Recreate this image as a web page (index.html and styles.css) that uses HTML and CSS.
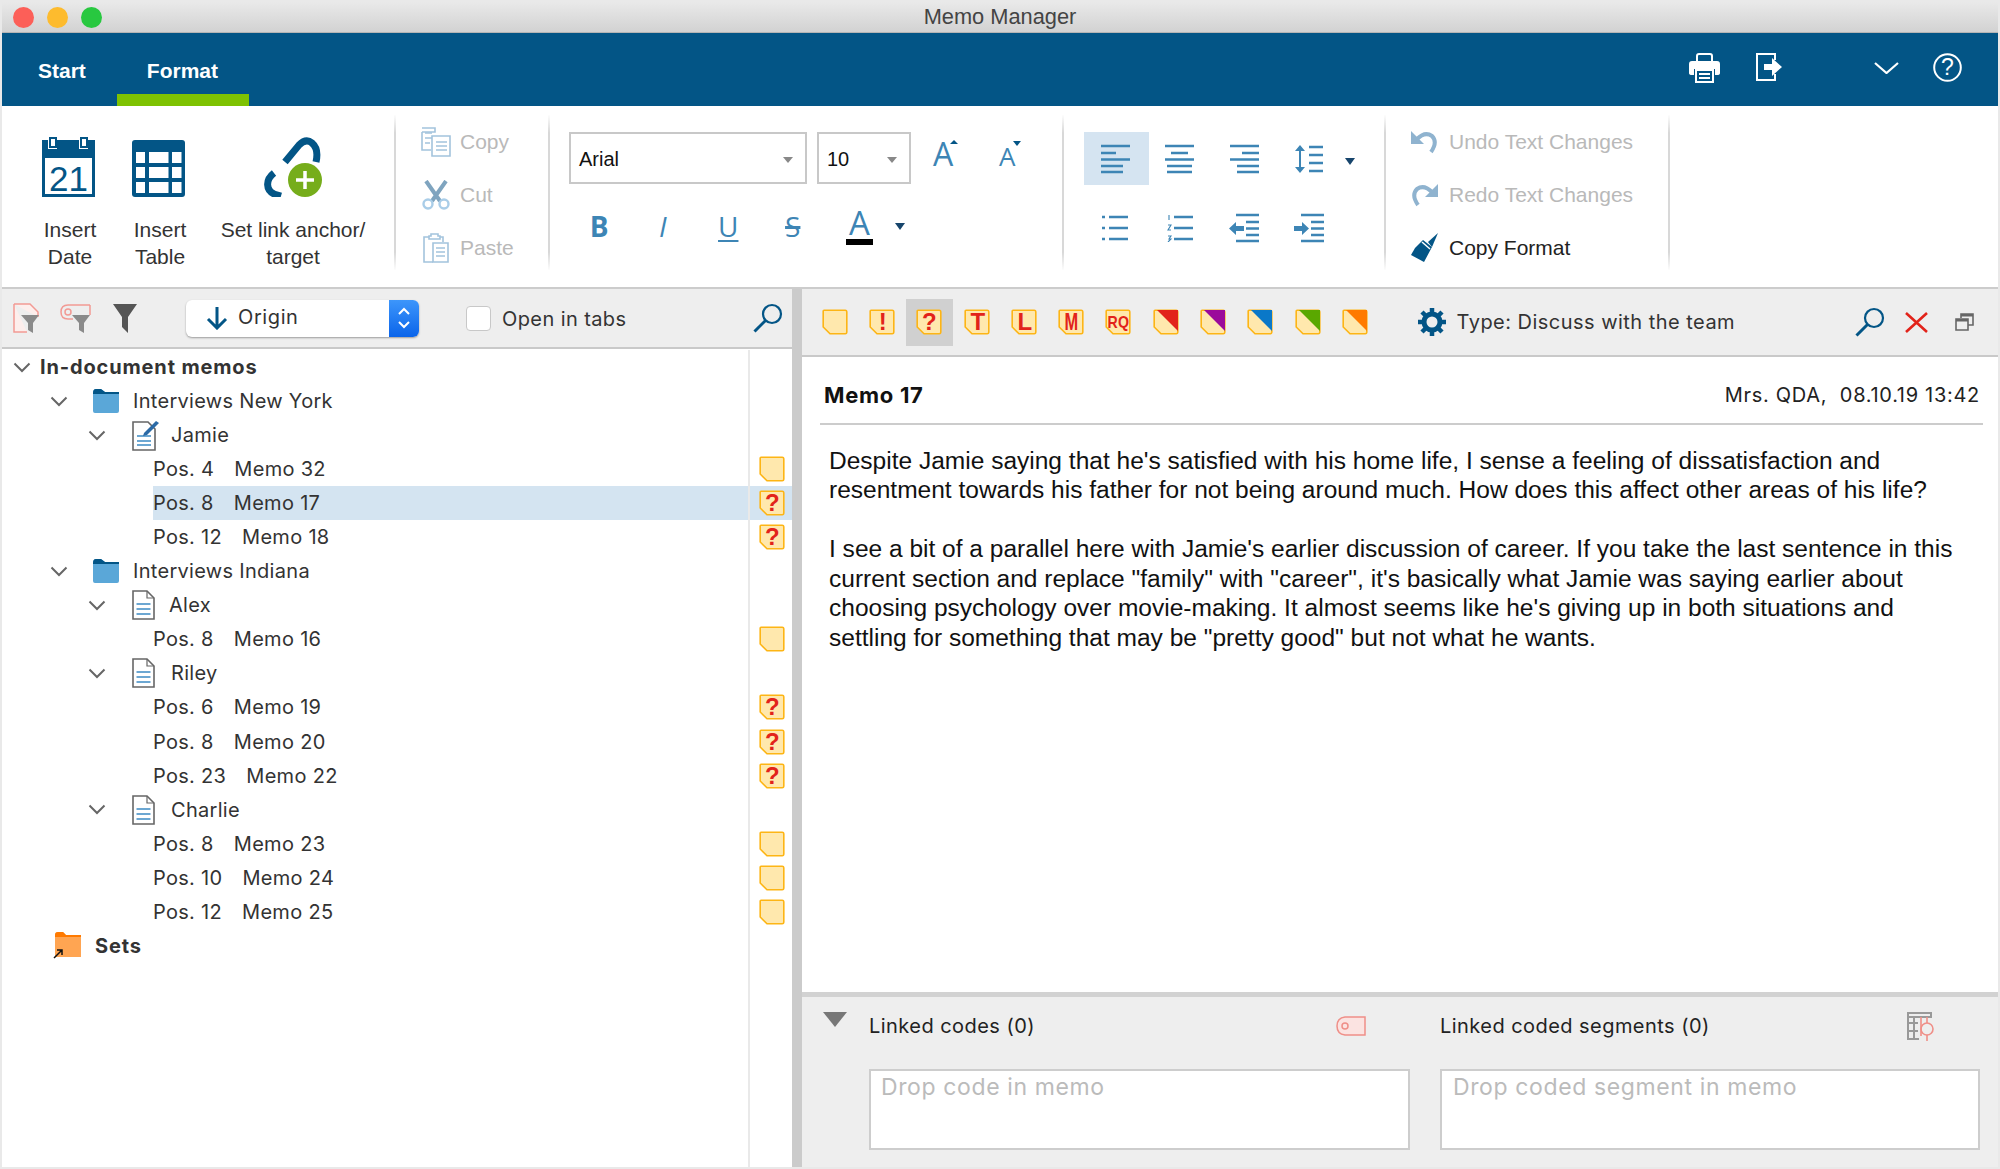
FILE: index.html
```html
<!DOCTYPE html>
<html lang="en">
<head>
  <meta charset="UTF-8" />
  <title>Memo Manager</title>
  <link rel="stylesheet" href="styles.css">
</head>
<body>

  <!-- shared icons -->
  <svg class="defs" width="0" height="0">
    <symbol id="note" viewBox="0 0 26 26">
      <path d="M2 1.2H23.2Q24.8 1.2 24.8 2.8V23.2Q24.8 24.8 23.2 24.8H8L1.2 18V2Q1.2 1.2 2 1.2Z" fill="#ffe8ad" stroke="#fdb515" stroke-width="1.6"/>
    </symbol>
    <symbol id="chevron" viewBox="0 0 18 11">
      <path d="M1.5 1.5L9 9L16.5 1.5" fill="none" stroke="#666" stroke-width="2"/>
    </symbol>
    <symbol id="folder" viewBox="0 0 26 24">
      <path d="M0 4Q0 0 3 0H8L12 3H26V22Q26 24 24 24H2Q0 24 0 22Z" fill="#5aa7d8"/>
      <path d="M0 4Q0 0 3 0H8L12 3H26V5H0Z" fill="#035586"/>
    </symbol>
    <symbol id="doc" viewBox="0 0 23 30">
      <path d="M1 1H15L22 8V29H1Z" fill="#fff" stroke="#666" stroke-width="1.6"/>
      <path d="M15 1V8H22" fill="none" stroke="#666" stroke-width="1.2"/>
      <path d="M4.5 14H18.500M4.500 19H18.500M4.500 24H18.500" stroke="#3d8ac4" stroke-width="1.6"/>
    </symbol>
    <symbol id="magnifier" viewBox="0 0 30 30">
      <circle cx="19" cy="11" r="9" fill="none" stroke="#035586" stroke-width="2.2"/>
      <path d="M12.500 17.500L1.500 28.500" stroke="#035586" stroke-width="3"/>
    </symbol>
    <symbol id="lines-left" viewBox="0 0 29 30">
      <path d="M0 2H29M0 9H15M0 15.500H29M0 22H22M0 28H22" stroke="#3d85b5" stroke-width="2.600"/>
    </symbol>
    <symbol id="lines-center" viewBox="0 0 29 30">
      <path d="M0 2H29M6 9H23M0 15.500H29M2 22H27M2 28H27" stroke="#3d85b5" stroke-width="2.600"/>
    </symbol>
    <symbol id="lines-right" viewBox="0 0 29 30">
      <path d="M0 2H29M12 9H29M0 15.500H29M7 22H29M7 28H29" stroke="#3d85b5" stroke-width="2.600"/>
    </symbol>
  </svg>

  <div class="window">

    <div class="title-bar">
      <div class="lights">
        <span class="light red"></span>
        <span class="light yellow"></span>
        <span class="light green"></span>
      </div>
      <span class="title">Memo Manager</span>
    </div>

    <div class="tab-bar">
      <span class="tab">Start</span>
      <span class="tab active">Format</span>
      <div class="tab-actions">
        <svg class="printer" width="31" height="30" viewBox="0 0 31 30">
          <path d="M8 8V3Q8 1 10 1H21Q23 1 23 3V8" fill="none" stroke="#fff" stroke-width="2"/>
          <path d="M3 8H28Q31 8 31 11V20Q31 22 28 22H26V16H5V22H3Q0 22 0 20V11Q0 8 3 8Z" fill="#fff"/>
          <path d="M7 17H24V29H7Z" fill="#035586" stroke="#fff" stroke-width="2"/>
          <path d="M10 21H21M10 25H21" stroke="#fff" stroke-width="2"/>
        </svg>
        <svg class="exit" width="26" height="28" viewBox="0 0 26 28">
          <path d="M19 7V1H1V27H19V21" fill="none" stroke="#fff" stroke-width="2"/>
          <path d="M8 11H16V5L26 14L16 23V17H8Z" fill="#fff"/>
        </svg>
        <svg class="caret" width="25" height="12" viewBox="0 0 25 12">
          <path d="M1 1L12.500 11L24 1" fill="none" stroke="#fff" stroke-width="2.200"/>
        </svg>
        <svg width="29" height="29" viewBox="0 0 29 29">
          <circle cx="14.500" cy="14.500" r="13.300" fill="none" stroke="#fff" stroke-width="2"/>
          <text class="help-mark" x="14.500" y="22" text-anchor="middle">?</text>
        </svg>
      </div>
    </div>

    <div class="ribbon">
      <div class="group group-insert">
        <div class="tool tool-date">
          <svg width="53" height="60" viewBox="0 0 53 60">
            <path d="M0 3H6V12H15V3H37V12H46V3H53V60H0Z" fill="#035586"/>
            <path d="M8 1H14V10H8ZM39 1H45V10H39Z" fill="#fff" stroke="#035586" stroke-width="2"/>
            <rect x="3" y="21" width="47" height="36" fill="#fff"/>
            <text class="cal-day" x="26.500" y="54" text-anchor="middle">21</text>
          </svg>
          <span>Insert<br>Date</span>
        </div>
        <div class="tool tool-table">
          <svg width="53" height="60" viewBox="0 0 53 60">
            <rect x="0" y="3" width="53" height="57" rx="3" fill="#035586"/>
            <path d="M4 15H13V26H4ZM17 15H36.500V26H17ZM40 15H49.500V26H40ZM4 30H13V41H4ZM17 30H36.500V41H17ZM40 30H49.500V41H40ZM4 45H13V56H4ZM17 45H36.500V56H17ZM40 45H49.500V56H40Z" fill="#fff"/>
          </svg>
          <span>Insert<br>Table</span>
        </div>
        <div class="tool tool-link">
          <svg width="58" height="60" viewBox="0 0 58 60">
            <path d="M21 25L35 8Q42 1 48 6Q55 12 52 25" fill="none" stroke="#035586" stroke-width="7"/>
            <path d="M10 36C1 43 2 53 10 57L17 59" fill="none" stroke="#035586" stroke-width="7"/>
            <circle cx="41" cy="43" r="17" fill="#76ad1b"/>
            <path d="M41 34V52M32 43H50" stroke="#fff" stroke-width="3.500"/>
          </svg>
          <span>Set link anchor/<br>target</span>
        </div>
      </div>

      <div class="group group-clipboard">
        <div class="action off">
          <svg width="30" height="30" viewBox="0 0 30 30">
            <path d="M1 1H14V5H1M1 5V23H10M14 5" fill="#fff" stroke="#a3c4dd" stroke-width="1.600"/>
            <path d="M4 6H11M4 11H11M4 16H9" stroke="#a3c4dd" stroke-width="1.500"/>
            <path d="M11 9H29V29H11Z" fill="#fff" stroke="#a3c4dd" stroke-width="1.600"/>
            <path d="M15 15H26M15 19H26M15 23H26" stroke="#a3c4dd" stroke-width="1.500"/>
          </svg>
          <span>Copy</span>
        </div>
        <div class="action off">
          <svg width="30" height="30" viewBox="0 0 30 30">
            <path d="M5 1L19 21M25 1L11 21" stroke="#7fa4bf" stroke-width="4"/>
            <circle cx="7" cy="24" r="4.500" fill="none" stroke="#a9cde8" stroke-width="2.400"/>
            <circle cx="23" cy="24" r="4.500" fill="none" stroke="#a9cde8" stroke-width="2.400"/>
          </svg>
          <span>Cut</span>
        </div>
        <div class="action off">
          <svg width="30" height="30" viewBox="0 0 30 30">
            <path d="M8 4H3V29H12M19 4H22V9" fill="none" stroke="#a3c4dd" stroke-width="1.600"/>
            <path d="M8 6V3H10V1H17V3H19V6Z" fill="#fff" stroke="#a3c4dd" stroke-width="1.600"/>
            <path d="M12 10H27V29H12Z" fill="#fff" stroke="#a3c4dd" stroke-width="1.600"/>
            <path d="M15 15H24M15 19H24M15 23H24" stroke="#a3c4dd" stroke-width="1.500"/>
          </svg>
          <span>Paste</span>
        </div>
      </div>

      <div class="group group-font">
        <div class="font-row">
          <div class="combo combo-font"><span>Arial</span><span class="combo-arrow"></span></div>
          <div class="combo combo-size"><span>10</span><span class="combo-arrow"></span></div>
          <span class="grow">A<i class="tip-up"></i></span>
          <span class="shrink">A<i class="tip-down"></i></span>
        </div>
        <div class="style-row">
          <span class="style bold">B</span>
          <span class="style italic">I</span>
          <span class="style under">U</span>
          <span class="style strike">S</span>
          <span class="style colour">A</span>
          <span class="drop-arrow"></span>
        </div>
      </div>

      <div class="group group-para">
        <div class="para-cell on"><svg width="29" height="30"><use href="#lines-left"/></svg></div>
        <div class="para-cell"><svg width="29" height="30"><use href="#lines-center"/></svg></div>
        <div class="para-cell"><svg width="29" height="30"><use href="#lines-right"/></svg></div>
        <div class="para-cell spacing">
          <svg width="28" height="30" viewBox="0 0 28 30">
            <path d="M5 4V26" stroke="#3d85b5" stroke-width="2"/>
            <path d="M0 7L5 1L10 7ZM0 23L5 29L10 23Z" fill="#3d85b5"/>
            <path d="M14 3H28M14 11H28M14 19H28M14 27H28" stroke="#3d85b5" stroke-width="2.600"/>
          </svg>
          <span class="drop-arrow"></span>
        </div>
        <div class="para-cell">
          <svg width="26" height="28" viewBox="0 0 26 28">
            <path d="M0 3H3M7 3H26M0 14H3M7 14H26M0 25H3M7 25H26" stroke="#3d85b5" stroke-width="2.400"/>
          </svg>
        </div>
        <div class="para-cell">
          <svg width="26" height="28" viewBox="0 0 26 28">
            <path d="M7 3H26M7 14H26M7 25H26" stroke="#3d85b5" stroke-width="2.400"/>
            <path d="M2 1V6M1 11H4L1 16H4M1 22H4L2 25H4L1 28" fill="none" stroke="#3d85b5" stroke-width="1.100"/>
          </svg>
        </div>
        <div class="para-cell">
          <svg width="30" height="30" viewBox="0 0 30 30">
            <path d="M7 2H30M17 9H30M17 15.500H30M17 22H30M7 28H30" stroke="#3d85b5" stroke-width="2.600"/>
            <path d="M0 15.500L7 9V13H15V18H7V22Z" fill="#3d85b5"/>
          </svg>
        </div>
        <div class="para-cell">
          <svg width="30" height="30" viewBox="0 0 30 30">
            <path d="M7 2H30M17 9H30M17 15.500H30M17 22H30M7 28H30" stroke="#3d85b5" stroke-width="2.600"/>
            <path d="M15 15.500L8 9V13H0V18H8V22Z" fill="#3d85b5"/>
          </svg>
        </div>
      </div>

      <div class="group group-undo">
        <div class="action off">
          <svg width="28" height="24" viewBox="0 0 28 24">
            <path d="M6 9Q14 1 21 6Q27 12 20 22" fill="none" stroke="#8fb3cf" stroke-width="4"/>
            <path d="M0 1V14H13Z" fill="#8fb3cf"/>
          </svg>
          <span>Undo Text Changes</span>
        </div>
        <div class="action off">
          <svg width="28" height="24" viewBox="0 0 28 24">
            <path d="M21 9Q13 1 6 6Q0 12 7 22" fill="none" stroke="#8fb3cf" stroke-width="4"/>
            <path d="M27 1V14H14Z" fill="#8fb3cf"/>
          </svg>
          <span>Redo Text Changes</span>
        </div>
        <div class="action">
          <svg width="28" height="30" viewBox="0 0 28 30">
            <path d="M17 9L27 0L21 14Z" fill="#035586"/>
            <path d="M12 7L21 14L13 29L0 22L4 15Z" fill="#035586"/>
            <path d="M11 9L19 16" stroke="#fff" stroke-width="1.500"/>
          </svg>
          <span>Copy Format</span>
        </div>
      </div>
    </div>

    <div class="panes">

      <div class="left-pane">
        <div class="tree-toolbar">
          <svg class="filter" width="26" height="30" viewBox="0 0 26 30">
            <path d="M1 1H17L25 9V14M1 1V29H14" fill="#fdeeec" stroke="#f29a94" stroke-width="1.500"/>
            <path d="M8 12H26L20 20V30L15 27V20Z" fill="#8a8a8a"/>
          </svg>
          <svg class="filter" width="31" height="30" viewBox="0 0 31 30">
            <path d="M30 2H8Q1 2 1 9Q1 16 8 16H13M30 2V12" fill="none" stroke="#f29a94" stroke-width="1.500"/>
            <circle cx="8" cy="9" r="3" fill="none" stroke="#f29a94" stroke-width="1.500"/>
            <path d="M12 12H30L24 20V30L19 27V20Z" fill="#8a8a8a"/>
          </svg>
          <svg class="filter" width="24" height="29" viewBox="0 0 24 29">
            <path d="M0 0H24L15 13V29L9 23V13Z" fill="#555"/>
          </svg>
          <div class="select">
            <svg width="22" height="24" viewBox="0 0 22 24">
              <path d="M11 1V22M2 13L11 22L20 13" fill="none" stroke="#035586" stroke-width="3"/>
            </svg>
            <span>Origin</span>
            <span class="select-stepper">
              <svg width="14" height="24" viewBox="0 0 14 24">
                <path d="M2 8L7 3L12 8M2 16L7 21L12 16" fill="none" stroke="#fff" stroke-width="2"/>
              </svg>
            </span>
          </div>
          <label class="tabs-check"><span class="box"></span>Open in tabs</label>
          <svg class="tree-search" width="30" height="30"><use href="#magnifier"/></svg>
        </div>

        <div class="tree">
          <div class="row"><div class="name root"><svg class="chev" width="18" height="11"><use href="#chevron"/></svg><b>In-document memos</b></div><div class="mark"></div></div>
          <div class="row"><div class="name l1"><svg class="chev" width="18" height="11"><use href="#chevron"/></svg><svg class="ico" width="26" height="24"><use href="#folder"/></svg>Interviews New York</div><div class="mark"></div></div>
          <div class="row"><div class="name l2"><svg class="chev" width="18" height="11"><use href="#chevron"/></svg>
            <svg class="ico pen" width="27" height="31" viewBox="0 0 27 31">
              <path d="M1 2H16L23 9V30H1Z" fill="#fff" stroke="#666" stroke-width="1.600"/>
              <path d="M5 16H19M5 21H19M5 25H19" stroke="#3d8ac4" stroke-width="1.500"/>
              <path d="M12 13L24 1L27 3L15 15L11 16Z" fill="#2b6aa6"/>
            </svg>Jamie</div><div class="mark"></div></div>
          <div class="row"><div class="name l3">Pos. 4<em>Memo 32</em></div><div class="mark"><svg width="26" height="26"><use href="#note"/></svg></div></div>
          <div class="row selected"><div class="name l3">Pos. 8<em>Memo 17</em></div><div class="mark"><svg width="26" height="26"><use href="#note"/><text class="q" x="13.500" y="21" text-anchor="middle">?</text></svg></div></div>
          <div class="row"><div class="name l3">Pos. 12<em>Memo 18</em></div><div class="mark"><svg width="26" height="26"><use href="#note"/><text class="q" x="13.500" y="21" text-anchor="middle">?</text></svg></div></div>
          <div class="row"><div class="name l1"><svg class="chev" width="18" height="11"><use href="#chevron"/></svg><svg class="ico" width="26" height="24"><use href="#folder"/></svg>Interviews Indiana</div><div class="mark"></div></div>
          <div class="row"><div class="name l2"><svg class="chev" width="18" height="11"><use href="#chevron"/></svg><svg class="ico" width="23" height="30"><use href="#doc"/></svg><span class="alex">Alex</span></div><div class="mark"></div></div>
          <div class="row"><div class="name l3">Pos. 8<em>Memo 16</em></div><div class="mark"><svg width="26" height="26"><use href="#note"/></svg></div></div>
          <div class="row"><div class="name l2"><svg class="chev" width="18" height="11"><use href="#chevron"/></svg><svg class="ico" width="23" height="30"><use href="#doc"/></svg>Riley</div><div class="mark"></div></div>
          <div class="row"><div class="name l3">Pos. 6<em>Memo 19</em></div><div class="mark"><svg width="26" height="26"><use href="#note"/><text class="q" x="13.500" y="21" text-anchor="middle">?</text></svg></div></div>
          <div class="row"><div class="name l3">Pos. 8<em>Memo 20</em></div><div class="mark"><svg width="26" height="26"><use href="#note"/><text class="q" x="13.500" y="21" text-anchor="middle">?</text></svg></div></div>
          <div class="row"><div class="name l3">Pos. 23<em>Memo 22</em></div><div class="mark"><svg width="26" height="26"><use href="#note"/><text class="q" x="13.500" y="21" text-anchor="middle">?</text></svg></div></div>
          <div class="row"><div class="name l2"><svg class="chev" width="18" height="11"><use href="#chevron"/></svg><svg class="ico" width="23" height="30"><use href="#doc"/></svg>Charlie</div><div class="mark"></div></div>
          <div class="row"><div class="name l3">Pos. 8<em>Memo 23</em></div><div class="mark"><svg width="26" height="26"><use href="#note"/></svg></div></div>
          <div class="row"><div class="name l3">Pos. 10<em>Memo 24</em></div><div class="mark"><svg width="26" height="26"><use href="#note"/></svg></div></div>
          <div class="row"><div class="name l3">Pos. 12<em>Memo 25</em></div><div class="mark"><svg width="26" height="26"><use href="#note"/></svg></div></div>
          <div class="row"><div class="name sets">
            <svg class="ico" width="28" height="27" viewBox="0 0 28 27">
              <path d="M2 3Q2 0 5 0H10L13 3H28V25H2Z" fill="#ffa552"/>
              <path d="M2 3Q2 0 5 0H10L13 3H28V5H2Z" fill="#ff7a00"/>
              <path d="M1 26L9 18M4 18H9V23" fill="none" stroke="#111" stroke-width="1.500"/>
            </svg><b>Sets</b></div><div class="mark"></div></div>
          <div class="row rest"><div class="name"></div><div class="mark"></div></div>
        </div>
      </div>

      <div class="splitter"></div>

      <div class="right-pane">
        <div class="memo-toolbar">
          <div class="note-types">
            <span class="note-type"><svg width="26" height="26"><use href="#note"/></svg></span>
            <span class="note-type"><svg width="26" height="26"><use href="#note"/><text class="q" x="14" y="21" text-anchor="middle">!</text></svg></span>
            <span class="note-type on"><svg width="26" height="26"><use href="#note"/><text class="q" x="13.500" y="21" text-anchor="middle">?</text></svg></span>
            <span class="note-type"><svg width="26" height="26"><use href="#note"/><text class="q" x="14" y="21" text-anchor="middle">T</text></svg></span>
            <span class="note-type"><svg width="26" height="26"><use href="#note"/><text class="q" x="14" y="21" text-anchor="middle">L</text></svg></span>
            <span class="note-type"><svg width="26" height="26"><use href="#note"/><text class="q" x="6.500" y="21" textLength="14" lengthAdjust="spacingAndGlyphs">M</text></svg></span>
            <span class="note-type"><svg width="26" height="26"><use href="#note"/><text class="q tiny" x="2.500" y="18.500" textLength="22" lengthAdjust="spacingAndGlyphs">RQ</text></svg></span>
            <span class="note-type"><svg width="26" height="26"><use href="#note"/><path d="M4 1H25V22Z" fill="#e2231a"/></svg></span>
            <span class="note-type"><svg width="26" height="26"><use href="#note"/><path d="M4 1H25V22Z" fill="#9b0a9b"/></svg></span>
            <span class="note-type"><svg width="26" height="26"><use href="#note"/><path d="M4 1H25V22Z" fill="#0a78c8"/></svg></span>
            <span class="note-type"><svg width="26" height="26"><use href="#note"/><path d="M4 1H25V22Z" fill="#5aa800"/></svg></span>
            <span class="note-type"><svg width="26" height="26"><use href="#note"/><path d="M4 1H25V22Z" fill="#ff7a00"/></svg></span>
          </div>
          <div class="memo-type">
            <svg width="28" height="28" viewBox="0 0 28 28">
              <circle cx="14" cy="14" r="8" fill="none" stroke="#035586" stroke-width="5"/>
              <path d="M14 0V6M14 22V28M0 14H6M22 14H28M4 4L8 8M20 20L24 24M24 4L20 8M8 20L4 24" stroke="#035586" stroke-width="4.500"/>
            </svg>
            <span>Type: Discuss with the team</span>
          </div>
          <div class="memo-actions">
            <svg width="30" height="30"><use href="#magnifier"/></svg>
            <svg width="23" height="21" viewBox="0 0 23 21">
              <path d="M1 1L22 20M22 1L1 20" stroke="#e2231a" stroke-width="2.600"/>
            </svg>
            <svg width="19" height="18" viewBox="0 0 19 18">
              <path d="M6 5V1H18V12H13" fill="none" stroke="#666" stroke-width="1.600"/>
              <path d="M6 1H18V3.500H6Z" fill="#666"/>
              <path d="M1 6H13V17H1Z" fill="none" stroke="#666" stroke-width="1.600"/>
              <path d="M1 6H13V8.500H1Z" fill="#666"/>
            </svg>
          </div>
        </div>

        <div class="memo-head">
          <b>Memo 17</b>
          <span>Mrs. QDA,&nbsp; 08.10.19 13:42</span>
        </div>

        <div class="memo-body">
          <p>Despite Jamie saying that he's satisfied with his home life, I sense a feeling of dissatisfaction and<br>resentment towards his father for not being around much. How does this affect other areas of his life?</p>
          <p>I see a bit of a parallel here with Jamie's earlier discussion of career. If you take the last sentence in this<br>current section and replace "family" with "career", it's basically what Jamie was saying earlier about<br>choosing psychology over movie-making. It almost seems like he's giving up in both situations and<br>settling for something that may be "pretty good" but not what he wants.</p>
        </div>

        <div class="links">
          <div class="link-col link-codes">
            <div class="link-head">
              <span class="fold"></span>
              <span class="link-title">Linked codes (0)</span>
              <svg class="link-icon" width="30" height="20" viewBox="0 0 30 20">
                <path d="M29 1H9Q1 2 1 10Q1 18 9 19H29Z" fill="#fbe3e1" stroke="#ef8f88" stroke-width="1.500"/>
                <circle cx="9" cy="10" r="3" fill="none" stroke="#ef8f88" stroke-width="1.500"/>
              </svg>
            </div>
            <div class="drop">Drop code in memo</div>
          </div>
          <div class="link-col link-segments">
            <div class="link-head">
              <span class="link-title">Linked coded segments (0)</span>
              <svg class="link-icon" width="28" height="29" viewBox="0 0 28 29">
                <path d="M1 1H24V5H1ZM1 1V27H12M1 11H11M1 19H11M7 5V27" fill="none" stroke="#999" stroke-width="2"/>
                <circle cx="20" cy="17" r="6" fill="none" stroke="#ef8f88" stroke-width="1.600"/>
                <path d="M20 5V11M20 23V29M14 5V24" stroke="#ef8f88" stroke-width="1.600"/>
              </svg>
            </div>
            <div class="drop">Drop coded segment in memo</div>
          </div>
        </div>
      </div>

    </div>
  </div>

</body>
</html>
```

FILE: styles.css
```css
* { box-sizing: border-box; }

html, body {
  margin: 0;
  height: 100%;
  overflow: hidden;
}
body {
  background: #e9e9e9;
  font-family: "Liberation Sans", Arial, sans-serif;
  color: #222;
}
svg { display: block; flex: none; }
.defs { position: absolute; }

.window {
  display: flex;
  flex-direction: column;
  height: 1165px;
  margin: 2px 2px 2px 2px;
  background: #fff;
}

/* title bar */
.title-bar {
  height: 31px;
  flex: none;
  display: flex;
  align-items: center;
  justify-content: center;
  background: linear-gradient(#e9e9e9, #d2d2d2);
  border-bottom: 1px solid #b5b5b5;
  position: relative;
}
.title {
  font-size: 21.8px;
  color: #444;
}
.lights {
  position: absolute;
  left: 11px;
  top: 5px;
  display: flex;
  gap: 13px;
}
.light {
  width: 21px;
  height: 21px;
  border-radius: 50%;
}
.light.red { background: #fc5f58; }
.light.yellow { background: #fdbb2e; }
.light.green { background: #28c840; }

/* tabs */
.tab-bar {
  height: 73px;
  flex: none;
  display: flex;
  background: #035586;
  color: #fff;
  font-size: 21px;
  font-weight: bold;
}
.tab {
  height: 73px;
  padding: 26px 31px 0 30px;
}
.tab:first-child { padding-left: 36px; padding-right: 31px; }
.tab.active {
  border-bottom: 12px solid #7ec202;
}
.tab-actions {
  margin-left: auto;
  display: flex;
  align-items: flex-start;
  padding: 20px 36px 0 0;
}
.printer { margin-right: 36px; }
.exit { margin-right: 92px; }
.caret { margin: 9px 34px 0 0; }
.help-mark {
  font: 23px "Liberation Sans", sans-serif;
  fill: #fff;
}

/* ribbon */
.ribbon {
  height: 183px;
  flex: none;
  display: flex;
  background: #fff;
  border-bottom: 2px solid #ccc;
  padding-top: 9px;
  font-size: 21px;
}
.group {
  height: 155px;
  border-right: 2px solid #ddd;
  border-image: linear-gradient(transparent, #d8d8d8 12%, #d8d8d8 88%, transparent) 1;
  flex: none;
}
.group-insert {
  width: 394px;
  display: flex;
  padding-top: 22px;
}
.tool {
  display: flex;
  flex-direction: column;
  align-items: center;
  text-align: center;
  color: #333;
  line-height: 27px;
}
.tool svg { margin-bottom: 19px; }
.tool-date { width: 80px; margin-left: 28px; }
.tool-date svg, .tool-table svg { margin-right: 3px; }
.tool-table { width: 80px; margin-left: 10px; }
.tool-link { width: 174px; margin-left: 6px; }
.cal-day {
  font: 35px "Liberation Sans", sans-serif;
  fill: #035586;
}

.group-clipboard {
  width: 154px;
  padding-left: 25px;
}
.action {
  height: 53px;
  display: flex;
  align-items: center;
  gap: 9px;
  color: #222;
}
.action.off { color: #b9b9b9; }

.group-font {
  width: 514px;
  padding: 17px 0 0 19px;
}
.font-row {
  display: flex;
  gap: 10px;
  height: 52px;
}
.combo {
  height: 52px;
  border: 2px solid #c8c8c8;
  display: flex;
  align-items: center;
  justify-content: space-between;
  padding: 3px 12px 0 8px;
  font-size: 20px;
  color: #111;
}
.combo-font { width: 238px; }
.combo-size { width: 94px; }
.combo-arrow {
  width: 0;
  height: 0;
  border: 5px solid transparent;
  border-top: 6px solid #888;
  border-bottom: 0;
}
.grow, .shrink {
  position: relative;
  font-family: "Open Sans", sans-serif;
  color: #3d85b5;
  line-height: 1;
}
.grow { font-size: 32px; margin: 6px 0 0 12px; width: 40px; }
.shrink { font-size: 26px; margin: 11px 0 0 16px; }
.tip-up, .tip-down {
  position: absolute;
  width: 0;
  height: 0;
  border: 4px solid transparent;
}
.tip-up { top: 2px; left: 17px; border-top: 0; border-bottom: 4px solid #035586; }
.tip-down { top: -2px; left: 14px; border-bottom: 0; border-top: 5px solid #035586; }

.style-row {
  display: flex;
  align-items: center;
  height: 44px;
  margin-top: 20px;
  margin-left: -2px;
  font-family: "Open Sans", sans-serif;
  font-size: 28px;
  color: #3d85b5;
}
.style {
  width: 64.5px;
  text-align: center;
  line-height: 1;
}
.style.italic { padding-right: 2px; }
.bold { font-weight: bold; }
.italic { font-style: italic; }
.under { text-decoration: underline; text-decoration-thickness: 2px; text-underline-offset: 3px; }
.strike { text-decoration: line-through; text-decoration-thickness: 3px; }
.colour {
  width: 27px;
  margin: 0 20px 0 21px;
  border-bottom: 6px solid #000;
  font-size: 33px;
  line-height: 36px;
  height: 40px;
  margin-top: -2px;
}
.drop-arrow {
  width: 0;
  height: 0;
  border: 5px solid transparent;
  border-top: 7px solid #17456c;
  border-bottom: 0;
}
.style-row .drop-arrow { margin-left: 2px; }

.group-para {
  width: 322px;
  padding: 17px 0 0 20px;
  display: grid;
  grid-template-columns: repeat(4, 64.5px);
  grid-template-rows: 53px 53px;
  row-gap: 16px;
}
.para-cell {
  display: flex;
  align-items: center;
  justify-content: center;
  padding-right: 2px;
}
.para-cell.on { background: #d5e4f1; }
.para-cell.spacing { position: relative; }
.spacing .drop-arrow { position: absolute; left: 67px; top: 26px; }

.group-undo {
  width: 284px;
  padding-left: 25px;
}
.group-undo .action { gap: 10px; }

/* panes */
.panes {
  flex: 1;
  min-height: 0;
  display: flex;
}
.left-pane {
  width: 790px;
  flex: none;
  display: flex;
  flex-direction: column;
}
.splitter {
  width: 10px;
  flex: none;
  background: #cbcbcb;
}
.right-pane {
  flex: 1;
  min-width: 0;
  display: flex;
  flex-direction: column;
}

.tree-toolbar {
  height: 60px;
  flex: none;
  background: #eee;
  border-bottom: 2px solid #c9c9c9;
  display: flex;
  align-items: center;
  font-family: Inter, sans-serif;
  font-size: 20px;
  letter-spacing: 0.4px;
  color: #333;
}
.filter:first-child { margin-left: 11px; }
.filter:nth-child(2) { margin-left: 21px; }
.filter:nth-child(3) { margin-left: 22px; }
.select {
  width: 233px;
  height: 37px;
  margin-left: 49px;
  background: #fff;
  border-radius: 6px;
  box-shadow: 0 1px 2px rgba(0,0,0,0.35);
  display: flex;
  align-items: center;
  padding-left: 20px;
  gap: 10px;
  font-size: 20px;
}
.select > span:first-of-type { margin-top: -2px; letter-spacing: 0.6px; }
.select-stepper {
  margin-left: auto;
  width: 30px;
  height: 37px;
  border-radius: 0 6px 6px 0;
  background: linear-gradient(#3d96fb, #0a64ea);
  display: flex;
  align-items: center;
  justify-content: center;
}
.tabs-check {
  display: flex;
  align-items: center;
  gap: 11px;
  margin-left: 47px;
  padding-top: 1px;
}
.box {
  width: 25px;
  height: 25px;
  background: #fff;
  border: 1px solid #c8c8c8;
  border-radius: 4px;
}
.tree-search { margin-left: auto; margin-right: 9px; }

.tree {
  flex: 1;
  min-height: 0;
  display: flex;
  flex-direction: column;
  padding-top: 1px;
  font-family: Inter, sans-serif;
  font-size: 20px;
  letter-spacing: 0.3px;
  color: #333;
  background: #fff;
}
.row {
  height: 34.06px;
  flex: none;
  display: flex;
}
.row.rest { flex: 1; }
.name {
  flex: 1;
  display: flex;
  align-items: center;
  white-space: pre;
}
.name em { font-style: normal; margin-left: 20px; }
.name b { font-weight: 700; letter-spacing: 0.85px; }
.root { padding-left: 11px; }
.root .chev { margin-right: 9px; }
.l1 { padding-left: 48px; }
.l1 .chev { margin-right: 25px; }
.l1 .ico { margin-right: 14px; }
.l2 { padding-left: 86px; }
.l2 .chev { margin-right: 26px; }
.l2 .ico { margin-right: 16px; }
.l2 .ico.pen { margin-right: 12px; }
.alex { margin-left: -2px; }
.l3 { margin-left: 151px; }
.sets { padding-left: 51px; }
.sets .ico { margin-right: 14px; }
.mark {
  width: 44px;
  flex: none;
  border-left: 2px solid #e9e9e9;
  padding: 4px 0 0 9px;
}
.selected .name, .selected .mark { background: #d4e4f1; }
.q {
  font: bold 24px "Liberation Sans", sans-serif;
  fill: #e2231a;
}
.q.tiny { font-size: 17px; }

.memo-toolbar {
  height: 68px;
  flex: none;
  background: #eee;
  border-bottom: 2px solid #c9c9c9;
  display: flex;
  align-items: center;
  font-family: Inter, sans-serif;
  font-size: 20px;
  letter-spacing: 0.47px;
  color: #333;
}
.note-types {
  display: flex;
  margin-left: 9px;
}
.note-type {
  width: 47.3px;
  height: 47px;
  display: flex;
  align-items: center;
  justify-content: center;
}
.note-type.on { background: #d0d0d0; }
.memo-type {
  display: flex;
  align-items: center;
  gap: 11px;
  margin-left: 39px;
}
.memo-actions {
  margin-left: auto;
  display: flex;
  align-items: center;
  gap: 20px;
  padding-right: 24px;
}
.memo-actions svg:last-child { margin-left: 7px; }

.memo-head {
  height: 68px;
  flex: none;
  margin: 0 15px 0 18px;
  border-bottom: 2px solid #ccc;
  display: flex;
  align-items: center;
  justify-content: space-between;
  padding: 10px 3px 0 4px;
  font-family: Inter, sans-serif;
  font-size: 20px;
  letter-spacing: 0.7px;
  color: #222;
}
.memo-head b { font-size: 22px; color: #111; }

.memo-body {
  flex: 1;
  min-height: 0;
  padding: 20.5px 20px 0 27px;
  font-size: 24.53px;
  line-height: 29.5px;
  color: #111;
}
.memo-body p { margin: 0 0 29.5px; }

.links {
  height: 175px;
  flex: none;
  background: #eee;
  border-top: 5px solid #d2d2d2;
  display: flex;
  font-family: Inter, sans-serif;
  font-size: 20px;
  letter-spacing: 0.45px;
  color: #222;
}
.link-col {
  display: flex;
  flex-direction: column;
}
.link-head {
  height: 58px;
  flex: none;
  display: flex;
  align-items: center;
}
.link-codes { width: 638px; padding-left: 21px; }
.link-segments { width: 540px; }
.fold {
  width: 0;
  height: 0;
  border: 12px solid transparent;
  border-top: 15px solid #777;
  border-bottom: 0;
  margin: -13px 22px 0 0;
}
.link-title { flex: none; }
.link-codes .link-icon { margin-left: auto; margin-right: 74px; }
.link-segments .link-icon { margin-left: auto; margin-right: 45px; }
.drop {
  height: 81px;
  margin-top: 14px;
  background: #fff;
  border: 2px solid #cdcdcd;
  padding: 2px 10px;
  color: #bbb;
  font-size: 23px;
  letter-spacing: 0.62px;
}
.link-segments .drop { padding-left: 11px; }
.link-codes .drop { margin-left: 46px; margin-right: 30px; }
```
